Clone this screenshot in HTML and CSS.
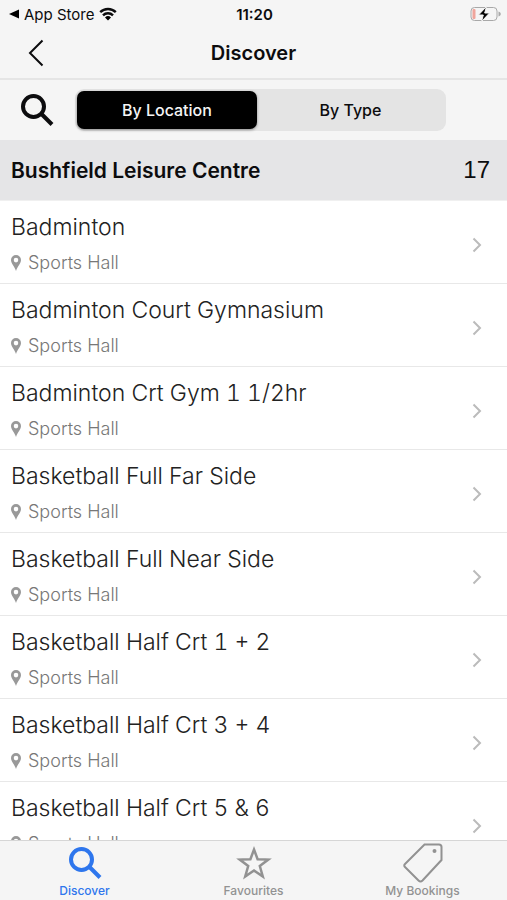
FILE: index.html
```html
<!doctype html>
<html lang="en">
<head>
<title>Discover</title>
<meta charset="utf-8">
<meta name="viewport" content="width=device-width, initial-scale=1">
<link rel="stylesheet" href="styles.css">
</head>
<body>

<svg class="sprite" aria-hidden="true">
  <symbol id="pin" viewBox="0 0 10 16">
    <path fill-rule="evenodd" d="M5 0a5 5 0 0 0-5 5c0 3.600 3.400 6.200 5 11 1.600-4.800 5-7.400 5-11a5 5 0 0 0-5-5zM5 2.800a2.300 2.300 0 1 1 0 4.600 2.300 2.300 0 0 1 0-4.600z"/>
  </symbol>
  <symbol id="chevron" viewBox="0 0 10 16">
    <path d="M1.500 1.500L8 8l-6.500 6.500"/>
  </symbol>
  <symbol id="search" viewBox="0 0 34 34">
    <circle cx="13.500" cy="13.500" r="10.500"/>
    <path d="M21.500 21L32 31.500"/>
  </symbol>
</svg>

<div class="status">
  <a class="back-app" href="#">
    <svg width="11" height="10" viewBox="0 0 11 10"><path d="M1 5l10-4.500v9z"/></svg>
    App Store
    <svg width="18" height="14" viewBox="0 0 18 14">
      <path class="arc" d="M1.200 5.200a11 11 0 0 1 15.600 0M4 8.300a7.100 7.100 0 0 1 10 0"/>
      <path d="M9 13.500l-3-3a4.300 4.300 0 0 1 6 0z"/>
    </svg>
  </a>
  <span class="time">11:20</span>
  <svg class="battery" width="31" height="16" viewBox="0 0 31 16">
    <rect class="shell" x="1" y="1.500" width="26" height="13" rx="3.500"/>
    <path class="tip" d="M28.500 5.500c3 1 3 4 0 5z"/>
    <rect class="charge" x="2.500" y="3" width="3" height="10" rx="1"/>
    <path class="bolt" d="M16.500 0.500L8.500 9h4.800l-1.800 6.500L19.500 7h-4.800z"/>
  </svg>
</div>

<header class="nav">
  <button class="back" aria-label="Back">
    <svg width="16" height="28" viewBox="0 0 16 28"><path d="M14.500 1.500L2 14l12.500 12.500"/></svg>
  </button>
  <h1>Discover</h1>
</header>

<div class="toolbar">
  <button class="find" aria-label="Search">
    <svg width="34" height="34"><use href="#search"/></svg>
  </button>
  <div class="segments">
    <button class="on" aria-pressed="true">By Location</button>
    <button aria-pressed="false">By Type</button>
  </div>
</div>

<main class="list">
  <h2><span>Bushfield Leisure Centre</span> <span class="count">17</span></h2>
  <ul>
    <li><a href="#">
      <span class="name">Badminton</span>
      <span class="place"><svg><use href="#pin"/></svg>Sports Hall</span>
      <svg class="go"><use href="#chevron"/></svg>
    </a></li>
    <li><a href="#">
      <span class="name">Badminton Court Gymnasium</span>
      <span class="place"><svg><use href="#pin"/></svg>Sports Hall</span>
      <svg class="go"><use href="#chevron"/></svg>
    </a></li>
    <li><a href="#">
      <span class="name">Badminton Crt Gym 1 1/2hr</span>
      <span class="place"><svg><use href="#pin"/></svg>Sports Hall</span>
      <svg class="go"><use href="#chevron"/></svg>
    </a></li>
    <li><a href="#">
      <span class="name">Basketball Full Far Side</span>
      <span class="place"><svg><use href="#pin"/></svg>Sports Hall</span>
      <svg class="go"><use href="#chevron"/></svg>
    </a></li>
    <li><a href="#">
      <span class="name">Basketball Full Near Side</span>
      <span class="place"><svg><use href="#pin"/></svg>Sports Hall</span>
      <svg class="go"><use href="#chevron"/></svg>
    </a></li>
    <li><a href="#">
      <span class="name">Basketball Half Crt 1 + 2</span>
      <span class="place"><svg><use href="#pin"/></svg>Sports Hall</span>
      <svg class="go"><use href="#chevron"/></svg>
    </a></li>
    <li><a href="#">
      <span class="name">Basketball Half Crt 3 + 4</span>
      <span class="place"><svg><use href="#pin"/></svg>Sports Hall</span>
      <svg class="go"><use href="#chevron"/></svg>
    </a></li>
    <li><a href="#">
      <span class="name">Basketball Half Crt 5 &amp; 6</span>
      <span class="place"><svg><use href="#pin"/></svg>Sports Hall</span>
      <svg class="go"><use href="#chevron"/></svg>
    </a></li>
  </ul>
</main>

<nav class="tabs">
  <a class="on" href="#" aria-current="page">
    <svg class="lens" width="34" height="34" viewBox="0 0 34 34"><use href="#search"/></svg>
    Discover
  </a>
  <a href="#">
    <svg class="star" width="36" height="36" viewBox="0 0 36 36">
      <path d="M18 4.500l3.600 9.700 10.700.4-8.500 6.400 3 10.500-8.800-6-8.800 6 3-10.500-8.500-6.400 10.700-.4z"/>
    </svg>
    Favourites
  </a>
  <a href="#">
    <svg class="tag" width="40" height="40" viewBox="0 0 40 40">
      <path d="M21.500 1.500H36q2.500 0 2.500 2.500v13L19.500 37.500q-2 2-4 0L2 24q-1.500-1.500 0-3z"/>
      <circle cx="31.500" cy="8" r="1"/>
    </svg>
    My Bookings
  </a>
</nav>

</body>
</html>
```
FILE: styles.css
```css
* {
  box-sizing: border-box;
}
body, h1, h2, ul {
  margin: 0;
  padding: 0;
}
body {
  display: flex;
  flex-direction: column;
  height: 100vh;
  background: #f5f5f5;
  color: #0c0c0e;
  font-family: Inter, "Liberation Sans", sans-serif;
}
a {
  color: inherit;
  text-decoration: none;
}
button {
  padding: 0;
  border: none;
  background: none;
  color: inherit;
  font: inherit;
  cursor: pointer;
}
svg {
  display: block;
  flex: none;
}
.sprite {
  position: absolute;
  width: 0;
  height: 0;
}

/* status bar */
.status {
  display: grid;
  grid-template-columns: 1fr auto 1fr;
  align-items: center;
  height: 28px;
  padding: 0 6px 0 8px;
  font-size: 15px;
}
.back-app {
  display: flex;
  align-items: center;
  gap: 5px;
}
.arc {
  fill: none;
  stroke: #0c0c0e;
  stroke-width: 2.4;
}
.time {
  font-weight: 600;
}
.battery {
  justify-self: end;
}
.shell {
  fill: none;
  stroke: #a8a8a8;
}
.tip {
  fill: #a8a8a8;
}
.charge {
  fill: #f0a59c;
}
.bolt {
  stroke: #f5f5f5;
  stroke-width: 1;
}

/* title bar */
.nav {
  display: grid;
  grid-template-columns: 1fr auto 1fr;
  align-items: center;
  height: 52px;
  padding: 0 28px;
  border-bottom: 2px solid #e5e5e5;
}
.back {
  justify-self: start;
  fill: none;
  stroke: #0c0c0e;
  stroke-width: 2;
}
h1 {
  font-size: 20px;
  font-weight: 600;
}

.toolbar {
  display: flex;
  align-items: center;
  gap: 21px;
  height: 60px;
  padding: 0 61px 0 20px;
}
.find {
  fill: none;
  stroke: #0c0c0e;
  stroke-width: 4;
}
.segments {
  display: grid;
  grid-template-columns: 49fr 51fr;
  flex: 1;
  height: 42px;
  padding: 2px;
  border-radius: 9px;
  background: #e4e4e4;
  font-size: 16px;
  font-weight: 500;
}
.segments button {
  border-radius: 7px;
}
.segments .on {
  background: #000;
  color: #f5f5f5;
  box-shadow: 0 1px 3px rgba(0,0,0,0.4);
}

/* activities */
.list {
  flex: 1;
  min-height: 0;
  overflow-y: auto;
  scrollbar-width: none;
  background: #fff;
}
h2 {
  display: flex;
  align-items: center;
  justify-content: space-between;
  height: 61px;
  padding: 0 17px 0 11px;
  border-bottom: 1px solid #f0f0f0;
  background: #e5e5e7;
  font-size: 21px;
  font-weight: 600;
}
.count {
  font-family: "Liberation Sans", Arial, sans-serif;
  font-size: 24px;
  font-weight: 400;
}
.list ul {
  list-style: none;
}
.list a {
  display: grid;
  grid-template-columns: 1fr auto;
  align-items: center;
  height: 83px;
  padding: 8px 25px 2px 11px;
  border-bottom: 1px solid #e8e8e8;
}
.name {
  color: #222;
  font-size: 23px;
  font-weight: 300;
  font-variant-numeric: tabular-nums;
  line-height: 36px;
}
.place {
  display: flex;
  align-items: center;
  gap: 7px;
  grid-row: 2;
  color: #777;
  font-size: 18px;
  font-weight: 300;
  line-height: 36px;
}
.place svg {
  width: 10px;
  height: 16px;
  fill: #999;
}
.go {
  grid-column: 2;
  grid-row: 1 / 3;
  width: 10px;
  height: 16px;
  fill: none;
  stroke: #bbb;
  stroke-width: 2;
}

/* bottom tabs */
.tabs {
  display: flex;
  height: 60px;
  border-top: 1px solid #d6d6d6;
}
.tabs a {
  display: flex;
  flex: 1;
  flex-direction: column;
  align-items: center;
  justify-content: space-between;
  padding: 2px 0;
  color: #929292;
  font-size: 12px;
  font-weight: 500;
  line-height: 14px;
}
.tabs .on {
  color: #2e76ed;
}
.tabs svg {
  height: 40px;
  fill: none;
  stroke: currentColor;
  stroke-width: 2;
}
.tabs .lens {
  stroke-width: 4;
}
.tabs .star {
  stroke-width: 2.5;
}
```
